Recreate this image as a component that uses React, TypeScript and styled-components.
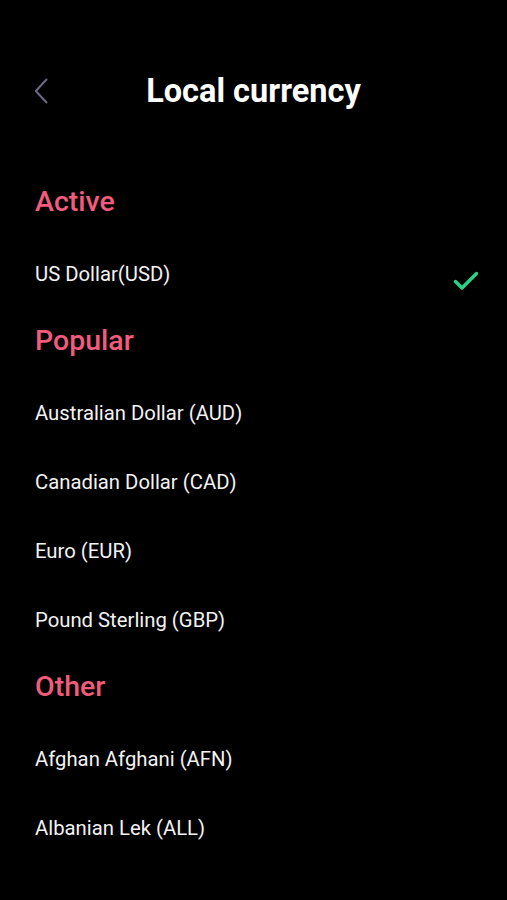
import styled, { createGlobalStyle } from "styled-components";

const GlobalStyle = createGlobalStyle`
  html, body {
    margin: 0;
    padding: 0;
    background: #000;
  }
  body {
    font-family: Roboto, "Noto Sans", Arial, sans-serif;
  }
`;

const sections = [
  { title: "Active", items: [{ name: "US Dollar(USD)", selected: true }] },
  {
    title: "Popular",
    items: [
      { name: "Australian Dollar (AUD)" },
      { name: "Canadian Dollar (CAD)" },
      { name: "Euro (EUR)" },
      { name: "Pound Sterling (GBP)" },
    ],
  },
  {
    title: "Other",
    items: [{ name: "Afghan Afghani (AFN)" }, { name: "Albanian Lek (ALL)" }],
  },
];

export default function App() {
  return (
    <>
      <GlobalStyle />
      <Screen>
        <Header>
          <BackButton aria-label="Back">
            <svg width="14" height="26" viewBox="0 0 14 26" fill="none">
              <path
                d="M12.5 1.5 L1.8 13 L12.5 24.5"
                stroke="#6d6984"
                strokeWidth="2"
                strokeLinecap="round"
                strokeLinejoin="round"
              />
            </svg>
          </BackButton>
          <Title>Local currency</Title>
        </Header>

        <List>
          {sections.map((section) => (
            <section key={section.title}>
              <SectionTitle>{section.title}</SectionTitle>
              {section.items.map((item) => (
                <Row key={item.name}>
                  <RowLabel>{item.name}</RowLabel>
                  {"selected" in item && item.selected && (
                    <Check width="26" height="20" viewBox="0 0 26 20" fill="none">
                      <path
                        d="M2.5 10.5 L9 17 L23.5 2.5"
                        stroke="#25d488"
                        strokeWidth="3.4"
                        strokeLinecap="round"
                        strokeLinejoin="round"
                      />
                    </Check>
                  )}
                </Row>
              ))}
            </section>
          ))}
        </List>
      </Screen>
    </>
  );
}

const Screen = styled.div`
  width: 507px;
  height: 900px;
  box-sizing: border-box;
  padding-top: 56px;
  overflow: hidden;
  background: #000;
  color: #fff;
`;

const Header = styled.header`
  position: relative;
  height: 70px;
  display: flex;
  align-items: center;
  justify-content: center;
`;

const BackButton = styled.button`
  position: absolute;
  left: 34px;
  top: 50%;
  transform: translateY(-50%);
  padding: 0;
  border: 0;
  background: none;
  display: flex;
`;

const Title = styled.h1`
  margin: 0;
  font-size: 32.5px;
  font-weight: 700;
  line-height: 1;
  color: #fff;
`;

const List = styled.div`
  margin-top: 43px;
  padding: 0 28px 0 35px;
`;

const SectionTitle = styled.h2`
  margin: 0;
  height: 70px;
  box-sizing: border-box;
  padding-top: 19px;
  font-size: 28.5px;
  font-weight: 500;
  line-height: 28px;
  color: #f15b7c;
`;

const Row = styled.div`
  height: 69px;
  display: flex;
  align-items: center;
  justify-content: space-between;
`;

const RowLabel = styled.span`
  padding-top: 2px;
  font-size: 20.3px;
  line-height: 1;
  color: #f2f2f2;
`;

const Check = styled.svg`
  margin-top: 14px;
`;
